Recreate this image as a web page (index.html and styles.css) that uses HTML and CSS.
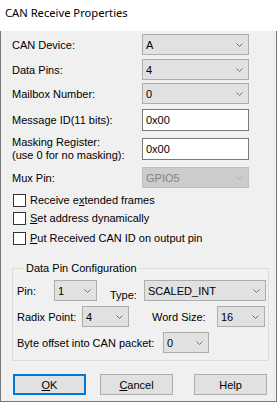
FILE: index.html
```html
<!DOCTYPE html>
<html lang="en">
<head>
    <meta charset="UTF-8" />
    <title>CAN Receive Properties</title>
    <link rel="stylesheet" href="styles.css">
</head>
<body>
    <div class="dialog">
        <div class="titlebar">CAN Receive Properties</div>
        <div class="client">
            <div class="row r1">
                <span class="lbl">CAN Device:</span>
                <div class="combo w-main"><span>A</span><svg class="chev" viewBox="0 0 7 4" width="7" height="4"><polyline points="0.5,0.5 3.5,3.5 6.5,0.5"/></svg></div>
            </div>
            <div class="row r2">
                <span class="lbl">Data Pins:</span>
                <div class="combo w-main"><span>4</span><svg class="chev" viewBox="0 0 7 4" width="7" height="4"><polyline points="0.5,0.5 3.5,3.5 6.5,0.5"/></svg></div>
            </div>
            <div class="row r3">
                <span class="lbl">Mailbox Number:</span>
                <div class="combo w-main"><span>0</span><svg class="chev" viewBox="0 0 7 4" width="7" height="4"><polyline points="0.5,0.5 3.5,3.5 6.5,0.5"/></svg></div>
            </div>
            <div class="row r4">
                <span class="lbl">Message ID(11 bits):</span>
                <div class="edit w-main">0x00</div>
            </div>
            <div class="row r5">
                <span class="lbl two">Masking Register:<br>(use 0 for no masking):</span>
                <div class="edit w-main">0x00</div>
            </div>
            <div class="row r6">
                <span class="lbl">Mux Pin:</span>
                <div class="combo w-main disabled"><span>GPIO5</span><svg class="chev" viewBox="0 0 7 4" width="7" height="4"><polyline points="0.5,0.5 3.5,3.5 6.5,0.5"/></svg></div>
            </div>

            <div class="check c1"><span class="box"></span>Receive e<u>x</u>tended frames</div>
            <div class="check c2"><span class="box"></span><u>S</u>et address dynamically</div>
            <div class="check c3"><span class="box"></span><u>P</u>ut Received CAN ID on output pin</div>

            <fieldset class="group">
                <legend>Data Pin Configuration</legend>
                <div class="grow g1">
                    <span class="glbl pin-lbl">Pin:</span>
                    <div class="combo w-pin"><span>1</span><svg class="chev" viewBox="0 0 7 4" width="7" height="4"><polyline points="0.5,0.5 3.5,3.5 6.5,0.5"/></svg></div>
                    <span class="glbl type-lbl">Type:</span>
                    <div class="combo w-type"><span>SCALED_INT</span><svg class="chev" viewBox="0 0 7 4" width="7" height="4"><polyline points="0.5,0.5 3.5,3.5 6.5,0.5"/></svg></div>
                </div>
                <div class="grow g2">
                    <span class="glbl radix-lbl">Radix Point:</span>
                    <div class="combo w-radix"><span>4</span><svg class="chev" viewBox="0 0 7 4" width="7" height="4"><polyline points="0.5,0.5 3.5,3.5 6.5,0.5"/></svg></div>
                    <span class="glbl word-lbl">Word Size:</span>
                    <div class="combo w-word"><span>16</span><svg class="chev" viewBox="0 0 7 4" width="7" height="4"><polyline points="0.5,0.5 3.5,3.5 6.5,0.5"/></svg></div>
                </div>
                <div class="grow g3">
                    <span class="glbl byte-lbl">Byte offset into CAN packet:</span>
                    <div class="combo w-byte"><span>0</span><svg class="chev" viewBox="0 0 7 4" width="7" height="4"><polyline points="0.5,0.5 3.5,3.5 6.5,0.5"/></svg></div>
                </div>
            </fieldset>

            <div class="buttons">
                <button class="btn default"><u>O</u>K</button>
                <button class="btn cancel"><u>C</u>ancel</button>
                <button class="btn help">Help</button>
            </div>
        </div>
    </div>
</body>
</html>
```

FILE: styles.css
```css
body {
    margin: 0;
    padding: 0;
    background: #f0f0f0;
    font-family: "Liberation Sans", Arial, sans-serif;
    font-size: 11px;
    color: #000;
}
.dialog {
    width: 277px;
    height: 402px;
    box-sizing: border-box;
    border: 1px solid #767676;
    border-top: none;
    background: #f0f0f0;
    display: flex;
    flex-direction: column;
}
.titlebar {
    height: 31px;
    margin: 0 -1px;
    background: #fff;
    font-family: "Noto Sans", "Open Sans", sans-serif;
    font-size: 11.2px;
    line-height: 26px;
    padding-left: 5px;
    box-sizing: border-box;
}
.client {
    padding: 3px 0 0 11px;
}
.row {
    display: flex;
    align-items: center;
}
.lbl {
    width: 130px;
    flex-shrink: 0;
}
.lbl.two {
    line-height: 13px;
}
.r1 { margin-bottom: 4px; }
.r2 { margin-bottom: 3px; }
.r3 { margin-bottom: 5px; }
.r4 { margin-bottom: 7px; }
.r5 { margin-bottom: 7px; height: 22px; }
.r6 { margin-bottom: 6px; }

.combo {
    height: 21px;
    box-sizing: border-box;
    border: 1px solid #adadad;
    background: #e1e1e1;
    display: flex;
    align-items: center;
    justify-content: space-between;
    padding: 0 5px 0 3px;
    flex-shrink: 0;
}
.combo.disabled {
    background: #cccccc;
    border-color: #bfbfbf;
    color: #838383;
}
.chev polyline {
    fill: none;
    stroke: #707070;
    stroke-width: 1;
}
.combo.disabled .chev polyline {
    stroke: #a8a8a8;
}
.edit {
    height: 22px;
    box-sizing: border-box;
    border: 1px solid #7a7a7a;
    background: #fff;
    padding: 0 3px;
    line-height: 20px;
}
.w-main { width: 107px; }

.check {
    display: flex;
    align-items: center;
    height: 13px;
    line-height: 13px;
}
.check u { text-decoration-thickness: 1px; }
.box {
    width: 13px;
    height: 13px;
    box-sizing: border-box;
    border: 1px solid #333;
    background: #fff;
    margin: 0 4px 0 1px;
}
.c1 { margin-bottom: 5px; }
.c2 { margin-bottom: 7px; }

.group {
    width: 257px;
    box-sizing: border-box;
    margin: 17px 0 0 0;
    padding: 5px 0 7px 4px;
    border: 1px solid #dcdcdc;
}
.group legend {
    padding: 0 2px;
    margin-left: 7px;
    line-height: 13px;
}
.grow {
    display: flex;
    align-items: center;
}
.g1 { margin-bottom: 5px; }
.g2 { margin-bottom: 5px; }
.glbl { flex-shrink: 0; }
.pin-lbl { width: 37px; }
.type-lbl { width: 34px; margin-left: 13px; align-self: flex-end; }
.radix-lbl { width: 65px; }
.word-lbl { width: 65px; margin-left: 23px; }
.byte-lbl { width: 146px; }
.w-pin { width: 43px; }
.w-type { width: 122px; }
.w-radix { width: 47px; }
.w-word { width: 48px; }
.w-byte { width: 46px; }

.buttons {
    display: flex;
    margin-top: 13px;
    padding-left: 1px;
}
.btn {
    width: 73px;
    height: 21px;
    box-sizing: border-box;
    border: 1px solid #adadad;
    background: #e1e1e1;
    font-family: "Liberation Sans", Arial, sans-serif;
    font-size: 11px;
    color: #000;
    padding: 0;
}
.btn.default {
    border: 2px solid #0078d7;
}
.btn.cancel { margin-left: 14px; }
.btn.help { margin-left: 21px; }
```
